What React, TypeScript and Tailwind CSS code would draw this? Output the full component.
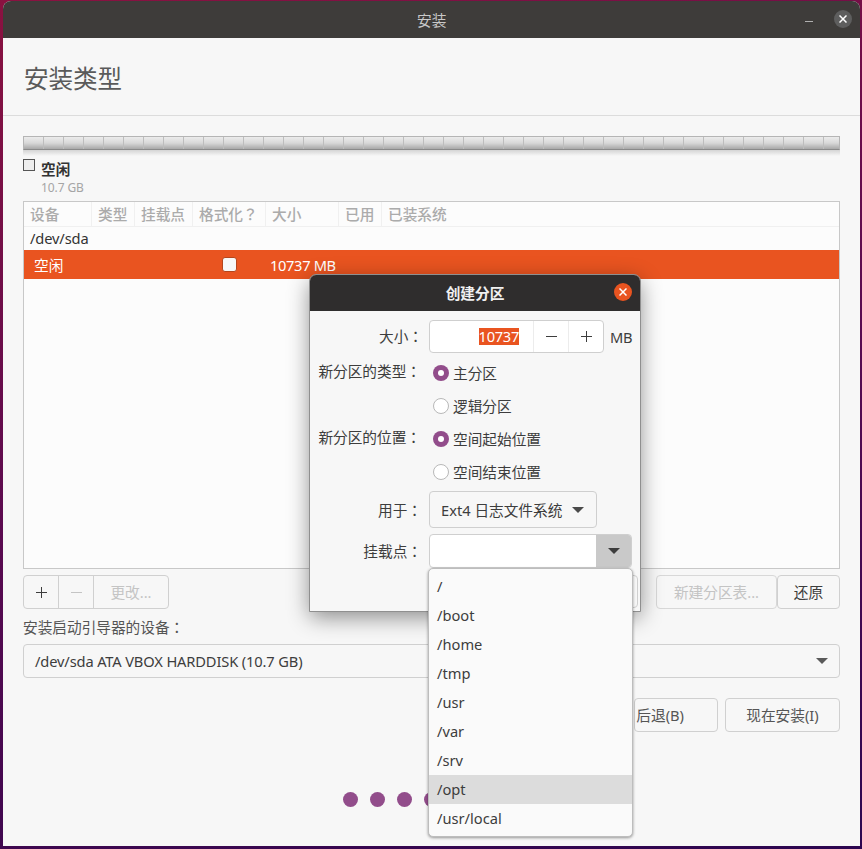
import React from "react";

const cjk = "font-['Noto_Sans','Noto_Sans_CJK_JP',sans-serif]";

const mountPoints = ["/", "/boot", "/home", "/tmp", "/usr", "/var", "/srv", "/opt", "/usr/local"];

const columns = [
    { name: "设备", width: "w-[68px]" },
    { name: "类型", width: "w-[43px]" },
    { name: "挂载点", width: "w-[58px]" },
    { name: "格式化？", width: "w-[73px]" },
    { name: "大小", width: "w-[73px]" },
    { name: "已用", width: "w-[43px]" },
    { name: "已装系统", width: "flex-1" },
];

const Arrow = ({ color = "#4a4a4a" }: { color?: string }) => (
    <svg width="12" height="6" viewBox="0 0 12 6">
        <path d="M0 0h12L6 6z" fill={color} />
    </svg>
);

const Plus = ({ color = "#3d3d3d" }: { color?: string }) => (
    <svg width="11" height="11" viewBox="0 0 11 11">
        <path d="M5.5 0v11M0 5.5h11" stroke={color} strokeWidth="1" />
    </svg>
);

const Minus = ({ color = "#3d3d3d" }: { color?: string }) => (
    <svg width="11" height="11" viewBox="0 0 11 11">
        <path d="M0 5.5h11" stroke={color} strokeWidth="1" />
    </svg>
);

const Cross = () => (
    <svg width="8" height="8" viewBox="0 0 8 8">
        <path d="M0.5 0.5l7 7M7.5 0.5l-7 7" stroke="#ffffff" strokeWidth="1.5" />
    </svg>
);

const Radio = ({ label, checked }: { label: string; checked?: boolean }) => (
    <div className="flex h-[33px] items-center pl-[4px]">
        {checked ? (
            <span className="flex h-[16px] w-[16px] items-center justify-center rounded-full bg-[#924d8b]">
                <span className="h-[6px] w-[6px] rounded-full bg-white" />
            </span>
        ) : (
            <span className="h-[16px] w-[16px] rounded-full border border-[#b8b8b8] bg-white" />
        )}
        <span className="ml-[4px]">{label}</span>
    </div>
);

const Label = ({ text, className = "" }: { text: string; className?: string }) => (
    <div className={`flex items-center justify-end ${className}`}>{text}</div>
);

export default function App() {
    return (
        <div className={`relative h-[849px] w-[862px] overflow-hidden bg-[linear-gradient(165deg,#8a1240_0%,#5a0a50_50%,#2c0650_100%)] pl-[3px] pt-[1px] text-[14.67px] text-[#3d3d3d] ${cjk}`}>
            {/* Main window */}
            <div className="flex h-[845px] w-[857px] flex-col rounded-t-[8px] bg-[#f7f7f7]">
                <div className="flex h-[37px] items-center rounded-t-[8px] bg-[#3e3c3a] pl-[414px] pr-[8px] text-[#c8c8c8]">
                    <span>安装</span>
                    <span className="ml-auto mr-[21px] mt-[4px] h-[1px] w-[8px] bg-[#b0b0b0]" />
                    <span className="mb-[1px] flex h-[18px] w-[18px] items-center justify-center rounded-full bg-[#5e5e5e]">
                        <Cross />
                    </span>
                </div>

                <div className="flex h-[78px] items-center border-b border-[#dcdcdc] pl-[21px] pt-[5px] text-[24.5px] text-[#5a5a5a]">
                    安装类型
                </div>

                <div className="flex flex-1 flex-col px-[20px] pt-[20px]">
                    {/* Partition bar */}
                    <div className="h-[14px] border border-[#b5b5b5] border-b-[#8a8a8a] bg-[repeating-linear-gradient(90deg,transparent_0,transparent_19px,#bdbdbd_19px,#bdbdbd_20px),linear-gradient(180deg,#ececec_0%,#d8d8d8_50%,#a8a8a8_100%)]" />
                    <div className="h-[6px] bg-[linear-gradient(180deg,#d4d4d4,#f7f7f7)]" />

                    <div className="mt-[4px] flex h-[20px] items-start">
                        <span className="mt-[-1px] h-[12px] w-[12px] border border-[#555555] bg-[#eeeeee]" />
                        <span className="ml-[6px] font-semibold leading-[18px] text-[#333333]">空闲</span>
                    </div>
                    <div className="ml-[18px] h-[21px] text-[12px] leading-[16px] tracking-[-0.1px] text-[#a5a5a5]">10.7 GB</div>

                    {/* Partition table */}
                    <div className="flex h-[368px] flex-col border border-[#c8c8c8] bg-[#fcfcfc]">
                        <div className="flex h-[25px] border-b border-[#f0f0f0] font-medium text-[#ababab]">
                            {columns.map((c) => (
                                <div key={c.name} className={`${c.width} flex items-center border-r border-[#f0f0f0] pl-[6px] last:border-r-0`}>
                                    {c.name}
                                </div>
                            ))}
                        </div>
                        <div className="flex h-[23px] items-center pb-[2px] pl-[6px] tracking-[-0.14px] text-[#333333]">/dev/sda</div>
                        <div className="flex h-[29px] items-center bg-[#e95420] text-white">
                            <span className="w-[198px] pl-[10px]">空闲</span>
                            <span className="mb-[1px] h-[15px] w-[15px] rounded-[3px] border border-[#b5451b] bg-[#f7f7f7]" />
                            <span className="ml-[33px] tracking-[-0.35px]">10737 MB</span>
                        </div>
                    </div>

                    {/* Toolbar */}
                    <div className="mt-[6px] flex h-[34px]">
                        <div className="flex rounded-[4px] border border-[#d0d0d0]">
                            <span className="flex w-[35px] items-center justify-center border-r border-[#d0d0d0]">
                                <Plus />
                            </span>
                            <span className="flex w-[35px] items-center justify-center border-r border-[#d0d0d0]">
                                <Minus color="#c4c4c4" />
                            </span>
                            <span className="flex w-[74px] items-center justify-center text-[#c4c4c4]">更改...</span>
                        </div>
                        <span className="ml-auto flex w-[121px] items-center justify-center rounded-[4px] border border-[#d8d8d8] text-[#c4c4c4]">
                            新建分区表...
                        </span>
                        <span className="flex w-[63px] items-center justify-center rounded-[4px] border border-[#d0d0d0]">还原</span>
                    </div>

                    <div className="mt-[9px] h-[26px] leading-[18px] text-[#555555]">安装启动引导器的设备：</div>

                    <div className="flex h-[34px] items-center justify-between rounded-[4px] border border-[#d0d0d0] pl-[11px] pr-[11px]">
                        <span className="mb-[1px] tracking-[-0.14px]">/dev/sda ATA VBOX HARDDISK (10.7 GB)</span>
                        <Arrow color="#5a5a5a" />
                    </div>

                    <div className="mt-[20px] flex h-[34px] justify-end gap-[7px]">
                        <span className="flex w-[84px] items-center justify-end rounded-[4px] border border-[#d0d0d0] pr-[33px] text-[#555555]">
                            <span className="whitespace-nowrap">后退(B)</span>
                        </span>
                        <span className="flex w-[115px] items-center justify-center rounded-[4px] border border-[#d0d0d0] text-[#555555]">现在安装(I)</span>
                    </div>

                    <div className="mt-[60px] flex justify-center gap-[12px]">
                        {[0, 1, 2, 3, 4, 5, 6].map((i) => (
                            <span key={i} className="h-[15px] w-[15px] rounded-full bg-[#924d8b]" />
                        ))}
                    </div>
                </div>
            </div>

            {/* Create partition dialog */}
            <div className="absolute left-[310px] top-[275px] flex h-[336px] w-[330px] flex-col rounded-t-[6px] bg-[#f7f7f7] shadow-[0_6px_22px_rgba(0,0,0,0.45)] outline outline-1 outline-[#8f8f8f]">
                <div className="relative flex h-[36px] items-center justify-center rounded-t-[6px] bg-[#2f2d2d] font-semibold text-[#f0f0f0]">
                    创建分区
                    <span className="absolute right-[8px] top-[8px] flex h-[18px] w-[18px] items-center justify-center rounded-full bg-[#e95420]">
                        <Cross />
                    </span>
                </div>
                <div className="grid grid-cols-[119px_1fr] pt-[9px]">
                    <Label text="大小：" className="h-[33px] pb-[1px] pr-[6px]" />
                    <div className="flex h-[33px] items-center">
                        <div className="flex h-[33px] w-[175px] rounded-[4px] border border-[#cfcfcf] bg-white">
                            <div className="flex flex-1 items-center justify-end pr-[14px]">
                                <span className="bg-[#e95420] leading-[17px] tracking-[-0.3px] text-white">10737</span>
                            </div>
                            <span className="flex w-[35px] items-center justify-center border-l border-[#ececec]">
                                <Minus />
                            </span>
                            <span className="flex w-[35px] items-center justify-center border-l border-[#ececec]">
                                <Plus />
                            </span>
                        </div>
                        <span className="ml-[6px] tracking-[-0.2px]">MB</span>
                    </div>

                    <Label text="新分区的类型：" className="mt-[3px] h-[33px] pb-[3px] pr-[8px]" />
                    <div className="mt-[3px]">
                        <Radio label="主分区" checked />
                    </div>
                    <div />
                    <Radio label="逻辑分区" />
                    <Label text="新分区的位置：" className="h-[33px] pb-[3px] pr-[8px]" />
                    <Radio label="空间起始位置" checked />
                    <div />
                    <Radio label="空间结束位置" />

                    <Label text="用于：" className="mt-[3px] h-[37px] pr-[7px]" />
                    <div className="mt-[3px] flex h-[37px] w-[168px] items-center justify-between rounded-[4px] border border-[#cfcfcf] pl-[11px] pr-[12px]">
                        <span className="whitespace-nowrap">Ext4 日志文件系统</span>
                        <Arrow />
                    </div>

                    <Label text="挂载点：" className="mt-[6px] h-[34px] pr-[7px]" />
                    <div className="mt-[6px] flex h-[34px] w-[203px] rounded-[4px] border border-[#cfcfcf] bg-white">
                        <div className="flex-1" />
                        <span className="flex w-[35px] items-center justify-center rounded-r-[3px] bg-[#c9c9c9]">
                            <Arrow color="#3d3d3d" />
                        </span>
                    </div>
                </div>
                <div className="mt-[7px] flex h-[33px] justify-end pr-[2px]">
                    <span className="w-[70px] rounded-[4px] border border-[#cfcfcf]" />
                </div>
            </div>

            {/* Mount point dropdown */}
            <div className="absolute left-[428px] top-[568px] flex h-[269px] w-[205px] flex-col rounded-[5px] border border-[#bdbdbd] bg-[#fafafa] pt-[3px] text-[#3d3d3d] shadow-[0_1px_3px_rgba(0,0,0,0.4)]">
                {mountPoints.map((m) => (
                    <div key={m} className={`flex h-[29px] shrink-0 items-center pb-[2px] pl-[8px] ${m === "/opt" ? "bg-[#dcdcdc]" : ""}`}>
                        {m}
                    </div>
                ))}
            </div>
        </div>
    );
}
